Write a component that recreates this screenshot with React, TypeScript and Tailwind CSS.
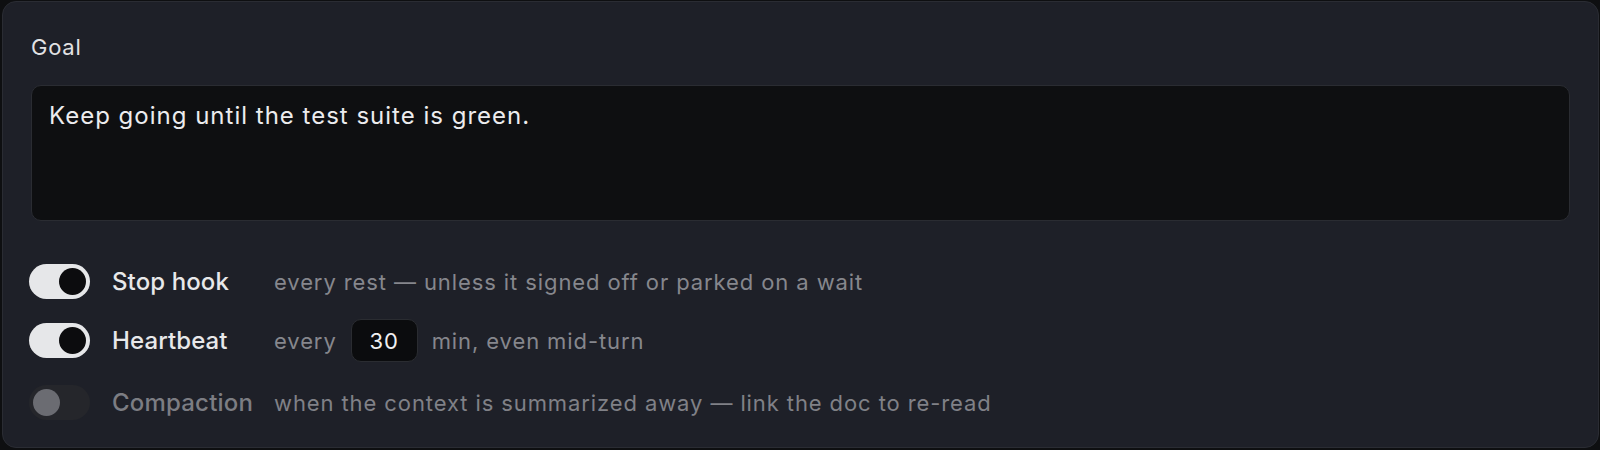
import React from "react";

function Toggle({ on }: { on: boolean }) {
  return on ? (
    <div className="relative h-[35px] w-[61px] shrink-0 rounded-full bg-[#e6e7e9]">
      <div className="absolute right-[4px] top-[4px] h-[27px] w-[27px] rounded-full bg-[#0c0c0e]" />
    </div>
  ) : (
    <div className="relative h-[35px] w-[61px] shrink-0 rounded-full bg-[#25262b]">
      <div className="absolute left-[4px] top-[4px] h-[27px] w-[27px] rounded-full bg-[#6b6c72]" />
    </div>
  );
}

export default function App() {
  return (
    <div
      className="h-[450px] w-[1600px] bg-[#0e0f11] pl-[2px] pr-[1px] pt-[1px]"
      style={{ fontFamily: "Inter, 'Noto Sans', sans-serif" }}
    >
      <div className="h-[447px] rounded-[14px] border border-[#2a2c33] bg-[#1e2028] px-[28px] pt-[31px]">
        <div className="text-[22px] leading-[28px] tracking-[0.75px] text-[#e2e2e4]">Goal</div>
        <div className="mt-[24px] h-[136px] rounded-[10px] border border-[#2a2c32] bg-[#0e0f11] pl-[17px] pt-[14px] text-[24px] leading-[32px] tracking-[1px] text-[#ececee]">
          Keep going until the test suite is green.
        </div>

        <div className="ml-[-2px] mt-[43px] flex items-center gap-[22px]">
          <Toggle on />
          <div className="w-[140px] text-[24px] font-medium leading-[32px] tracking-[0.1px] text-[#e8e8ea]">Stop hook</div>
          <div className="text-[22px] leading-[30px] tracking-[0.9px] text-[#86878d]">
            every rest — unless it signed off or parked on a wait
          </div>
        </div>

        <div className="ml-[-2px] mt-[20px] flex items-center gap-[22px]">
          <Toggle on />
          <div className="w-[140px] text-[24px] font-medium leading-[32px] tracking-[0.1px] text-[#e8e8ea]">Heartbeat</div>
          <div className="flex items-center gap-[14px] text-[22px] leading-[30px] tracking-[0.9px] text-[#86878d]">
            <span>every</span>
            <div className="flex h-[43px] w-[67px] items-center justify-center rounded-[10px] border border-[#2a2c31] bg-[#0b0c0e] text-[22px] tracking-[0.9px] text-[#f0f0f2]">
              30
            </div>
            <span>min, even mid-turn</span>
          </div>
        </div>

        <div className="ml-[-2px] mt-[23px] flex items-center gap-[22px]">
          <Toggle on={false} />
          <div className="w-[140px] text-[24px] font-medium leading-[32px] tracking-[0.2px] text-[#7c7d83]">Compaction</div>
          <div className="text-[22px] leading-[30px] tracking-[0.9px] text-[#808187]">
            when the context is summarized away — link the doc to re-read
          </div>
        </div>
      </div>
    </div>
  );
}
